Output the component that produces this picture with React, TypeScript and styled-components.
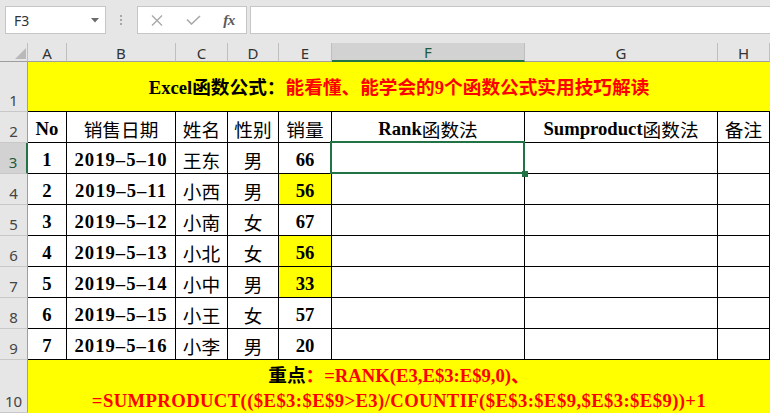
import React from 'react';
import styled, { createGlobalStyle, css } from 'styled-components';

const GREEN = '#217346';
const YELLOW = '#ffff00';
const RED = '#ff0000';

// 表格列宽：行号 + A..H
const COLS = '28px 39px 109px 52px 51px 53px 193px 193px 52px';

const GlobalStyle = createGlobalStyle`
  html, body {
    margin: 0;
    padding: 0;
    background: #fff;
  }
  body {
    width: 770px;
    height: 413px;
    overflow: hidden;
    font-family: "Noto Sans", "Liberation Sans", sans-serif;
  }
`;

const Page = styled.div`
  width: 770px;
  height: 413px;
  overflow: hidden;
  background: #fff;
`;

// 顶部编辑栏
const Toolbar = styled.div`
  height: 43px;
  box-sizing: border-box;
  padding: 6px 0 0 5px;
  background: #e6e6e6;
  display: flex;
  align-items: flex-start;
`;

const NameBox = styled.div`
  width: 101px;
  height: 28px;
  box-sizing: border-box;
  border: 1px solid #c6c6c6;
  background: #fff;
  display: flex;
  align-items: center;
  justify-content: space-between;
  padding: 0 6px 0 8px;
  font-size: 14px;
  color: #333;
`;

const Grip = styled.div`
  width: 3px;
  height: 28px;
  margin: 0 14px;
  display: flex;
  flex-direction: column;
  justify-content: center;
  gap: 2px;

  span {
    display: block;
    width: 2px;
    height: 2px;
    background: #a6a6a6;
  }
`;

const FormulaButtons = styled.div`
  width: 110px;
  height: 28px;
  box-sizing: border-box;
  border: 1px solid #c6c6c6;
  background: #fff;
  display: grid;
  grid-template-columns: repeat(3, 36px);
  padding-left: 1px;
`;

const FxButton = styled.div`
  display: flex;
  align-items: center;
  justify-content: center;
  color: #a6a6a6;
`;

const FxLabel = styled.span`
  font-family: "Liberation Serif", serif;
  font-style: italic;
  font-weight: 700;
  font-size: 15px;
  color: #595959;
  letter-spacing: -0.5px;
`;

const FormulaInput = styled.div`
  flex: 1;
  height: 28px;
  margin-left: 3px;
  box-sizing: border-box;
  border: 1px solid #c6c6c6;
  border-right: none;
  background: #fff;
`;

// 列标题
const ColHeaderRow = styled.div`
  display: grid;
  grid-template-columns: ${COLS};
  height: 19px;
  background: #e6e6e6;
`;

const Corner = styled.div`
  position: relative;
  box-sizing: border-box;
  border-right: 1px solid #bfbfbf;
  border-bottom: 1px solid #9e9e9e;
`;

const ColHead = styled.div<{ $active?: boolean }>`
  box-sizing: border-box;
  display: flex;
  align-items: center;
  justify-content: center;
  padding-top: 2px;
  font-size: 15px;
  line-height: 1;
  color: #333;
  border-right: 1px solid #bfbfbf;
  border-bottom: 1px solid #9e9e9e;

  ${p => p.$active && css`
    background: #d2d2d2;
    color: #1f5a3e;
    border-bottom: 2px solid ${GREEN};
  `}
`;

// 工作表主体
const Sheet = styled.div`
  display: grid;
  grid-template-columns: ${COLS};
  grid-template-rows: 50px repeat(8, 31px) 53px;
`;

const RowHead = styled.div<{ $active?: boolean }>`
  box-sizing: border-box;
  background: #e6e6e6;
  border-right: 1px solid #9e9e9e;
  border-bottom: 1px solid #c8c8c8;
  display: flex;
  align-items: flex-end;
  justify-content: center;
  padding-bottom: 3px;
  font-size: 15px;
  line-height: 1;
  color: #444;

  ${p => p.$active && css`
    background: #d2d2d2;
    color: #1f5a3e;
    border-right: 2px solid ${GREEN};
  `}
`;

const Cell = styled.div<{ $fill?: boolean; $han?: boolean; $wide?: boolean; $selected?: boolean }>`
  position: relative;
  box-sizing: border-box;
  border-right: 1px solid #000;
  border-bottom: 1px solid #000;
  background: ${p => (p.$fill ? YELLOW : '#fff')};
  display: flex;
  align-items: center;
  justify-content: center;
  padding-top: 3px;
  font-family: "Liberation Serif", "Noto Sans CJK SC", serif;
  font-size: 18.67px;
  font-weight: ${p => (p.$han ? 400 : 700)};
  letter-spacing: ${p => (p.$wide ? '1px' : 'normal')};
  color: #000;
  white-space: nowrap;

  ${p => p.$selected && css`
    &::before {
      content: "";
      position: absolute;
      top: -2px;
      left: -2px;
      right: -1px;
      bottom: -1px;
      border: 2px solid ${GREEN};
      z-index: 2;
    }
    &::after {
      content: "";
      position: absolute;
      right: -4px;
      bottom: -4px;
      width: 6px;
      height: 6px;
      background: ${GREEN};
      z-index: 3;
    }
  `}
`;

const Han = styled.span`
  font-weight: 400;
`;

const Banner = styled.div<{ $last?: boolean }>`
  grid-column: 2 / -1;
  box-sizing: border-box;
  background: ${YELLOW};
  border-bottom: ${p => (p.$last ? 'none' : '1px solid #000')};
  display: flex;
  flex-direction: column;
  align-items: center;
  justify-content: center;
  padding-top: 2px;
  font-family: "Liberation Serif", "Noto Sans CJK SC", serif;
  font-size: 18.67px;
  font-weight: 700;
  line-height: 25px;
  color: #000;
  white-space: nowrap;
`;

const Red = styled.span<{ $spaced?: boolean }>`
  color: ${RED};
  letter-spacing: ${p => (p.$spaced ? '0.4px' : 'normal')};
`;

const rows = [
  { no: '1', date: '2019–5–10', name: '王东', sex: '男', qty: '66', hi: false },
  { no: '2', date: '2019–5–11', name: '小西', sex: '男', qty: '56', hi: true },
  { no: '3', date: '2019–5–12', name: '小南', sex: '女', qty: '67', hi: false },
  { no: '4', date: '2019–5–13', name: '小北', sex: '女', qty: '56', hi: true },
  { no: '5', date: '2019–5–14', name: '小中', sex: '男', qty: '33', hi: true },
  { no: '6', date: '2019–5–15', name: '小王', sex: '女', qty: '57', hi: false },
  { no: '7', date: '2019–5–16', name: '小李', sex: '男', qty: '20', hi: false },
];

const letters = ['A', 'B', 'C', 'D', 'E', 'F', 'G', 'H'];

export default function App() {
  return (
    <Page>
      <GlobalStyle />
      <Toolbar>
        <NameBox>
          <span>F3</span>
          <svg width="8" height="5" viewBox="0 0 8 5">
            <polygon points="0,0 8,0 4,4.5" fill="#6b6b6b" />
          </svg>
        </NameBox>
        <Grip>
          <span />
          <span />
          <span />
        </Grip>
        <FormulaButtons>
          <FxButton>
            <svg width="12" height="11" viewBox="0 0 12 11">
              <path d="M1 0.5 L11 10.5 M11 0.5 L1 10.5" stroke="#a9a9a9" strokeWidth="1.4" fill="none" />
            </svg>
          </FxButton>
          <FxButton>
            <svg width="15" height="10" viewBox="0 0 15 10">
              <path d="M1 4.5 L5.5 9 L14 1" stroke="#a9a9a9" strokeWidth="1.6" fill="none" />
            </svg>
          </FxButton>
          <FxButton>
            <FxLabel>fx</FxLabel>
          </FxButton>
        </FormulaButtons>
        <FormulaInput />
      </Toolbar>

      <ColHeaderRow>
        <Corner>
          <svg width="28" height="18" viewBox="0 0 28 18" style={{ display: 'block' }}>
            <polygon points="26,5 26,16 15,16" fill="#b9b9b9" />
          </svg>
        </Corner>
        {letters.map(l => (
          <ColHead key={l} $active={l === 'F'}>{l}</ColHead>
        ))}
      </ColHeaderRow>

      <Sheet>
        <RowHead>1</RowHead>
        <Banner>
          <span>
            Excel函数公式：<Red>能看懂、能学会的9个函数公式实用技巧解读</Red>
          </span>
        </Banner>

        <RowHead>2</RowHead>
        <Cell>No</Cell>
        <Cell $han>销售日期</Cell>
        <Cell $han>姓名</Cell>
        <Cell $han>性别</Cell>
        <Cell $han>销量</Cell>
        <Cell>Rank<Han>函数法</Han></Cell>
        <Cell>Sumproduct<Han>函数法</Han></Cell>
        <Cell $han>备注</Cell>

        {rows.map((r, i) => (
          <React.Fragment key={r.no}>
            <RowHead $active={i === 0}>{i + 3}</RowHead>
            <Cell>{r.no}</Cell>
            <Cell $wide>{r.date}</Cell>
            <Cell $han>{r.name}</Cell>
            <Cell $han>{r.sex}</Cell>
            <Cell $fill={r.hi}>{r.qty}</Cell>
            <Cell $selected={i === 0} />
            <Cell />
            <Cell />
          </React.Fragment>
        ))}

        <RowHead>10</RowHead>
        <Banner $last>
          <span>
            重点<Red>：=RANK(E3,E$3:E$9,0)、</Red>
          </span>
          <Red $spaced>=SUMPRODUCT(($E$3:$E$9&gt;E3)/COUNTIF($E$3:$E$9,$E$3:$E$9))+1</Red>
        </Banner>
      </Sheet>
    </Page>
  );
}
